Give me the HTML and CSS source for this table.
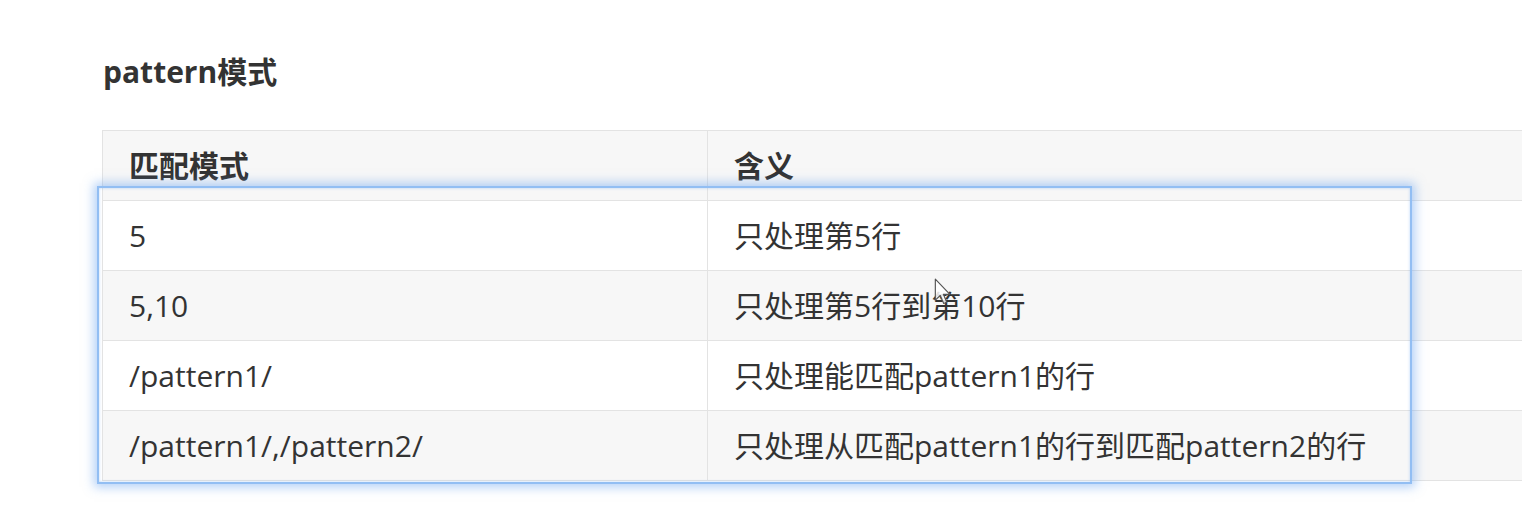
FILE: index.html
```html
<!DOCTYPE html>
<html lang="zh-CN">
<head>
<meta charset="utf-8">
<title>pattern模式</title>
<link rel="stylesheet" href="styles.css">
</head>
<body>
<div class="page">
  <h4 class="title">pattern模式</h4>
  <table class="grid">
    <thead>
      <tr><th class="c1">匹配模式</th><th>含义</th></tr>
    </thead>
    <tbody>
      <tr><td>5</td><td>只处理第5行</td></tr>
      <tr class="alt"><td>5,10</td><td>只处理第5行到第10行</td></tr>
      <tr><td>/pattern1/</td><td>只处理能匹配pattern1的行</td></tr>
      <tr class="alt"><td>/pattern1/,/pattern2/</td><td>只处理从匹配pattern1的行到匹配pattern2的行</td></tr>
    </tbody>
  </table>
  <div class="select-box"></div>
  <svg class="cursor" width="19" height="28" viewBox="0 0 16 24">
    <path d="M1 1 L1 19 L5.2 15 L8.2 21.8 L10.8 20.7 L7.9 14 L13.5 14 Z" fill="#fff" fill-opacity="0.85" stroke="#555" stroke-width="1" stroke-linejoin="round"/>
  </svg>
</div>
</body>
</html>
```
FILE: styles.css
```css
html, body {
  margin: 0;
  padding: 0;
  background: #fff;
  overflow: hidden;
}
.page {
  position: relative;
  width: 1522px;
  height: 524px;
  padding: 52px 0 0 102px;
  box-sizing: border-box;
  font-family: "Open Sans", "Noto Sans CJK SC", sans-serif;
  color: #333;
}
.title {
  margin: 0 0 38px 1px;
  font-size: 30px;
  line-height: 40px;
  font-weight: 700;
  color: #333;
}
.grid {
  border-collapse: collapse;
  width: 1640px;
  font-size: 30px;
  table-layout: fixed;
}
.grid th, .grid td {
  border: 1px solid #e3e3e3;
  padding: 0 26px;
  height: 69px;
  text-align: left;
  vertical-align: middle;
  white-space: nowrap;
  line-height: 46px;
}
.grid th {
  font-weight: 700;
  background: #f7f7f7;
}
.grid .c1 {
  width: 552px;
}
.grid tbody tr { background: #fff; }
.grid tbody tr.alt { background: #f7f7f7; }
.select-box {
  position: absolute;
  left: 97px;
  top: 186px;
  width: 1311px;
  height: 294px;
  border: 2px solid #92bef3;
  box-shadow: 0 0 10px 3px rgba(100, 160, 240, 0.5), inset 0 0 3px rgba(100, 160, 240, 0.45);
  pointer-events: none;
}
.cursor {
  position: absolute;
  left: 934px;
  top: 278px;
}
```
